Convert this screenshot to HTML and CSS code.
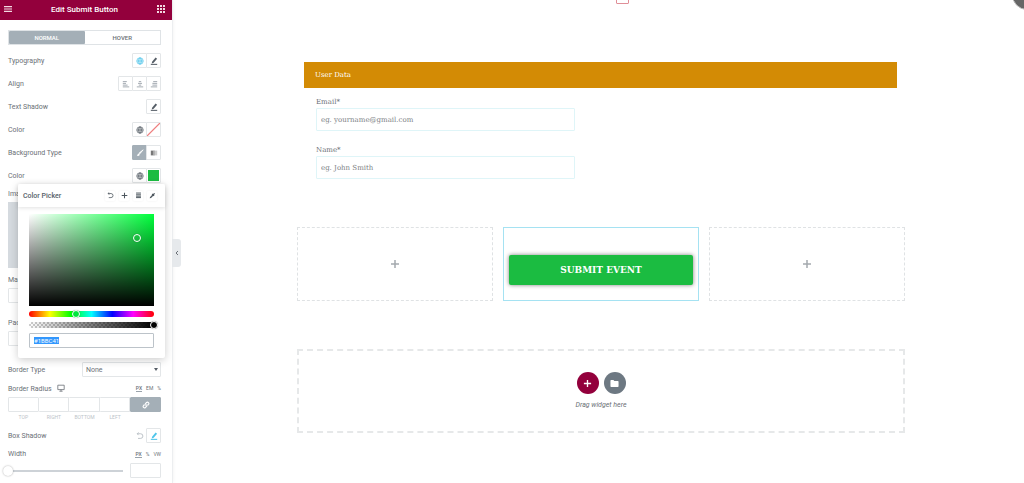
FILE: index.html
```html
<!DOCTYPE html>
<html lang="en">
<head>
  <meta charset="UTF-8">
  <meta name="viewport" content="width=device-width, initial-scale=1.0">
  <title>Edit Submit Button</title>
  <link rel="stylesheet" href="styles.css">
</head>
<body>
  <svg class="sprite" aria-hidden="true">
    <symbol id="plus" viewBox="0 0 10 10"><path d="M5 1v8M1 5h8" fill="none" stroke="currentColor" stroke-width="1.5"/></symbol>
    <symbol id="pen" viewBox="0 0 10 10"><path d="M2.600 5.800 7 .6l1.900 1.500-4.300 5.100-2.400.8z" fill="currentColor"/><path d="M1 9.200h8" stroke="currentColor" stroke-width="1.300"/></symbol>
    <symbol id="globe" viewBox="0 0 10 10"><g fill="none" stroke="currentColor" stroke-width=".9"><circle cx="5" cy="5" r="4"/><ellipse cx="5" cy="5" rx="1.9" ry="4"/><path d="M1 5h8M5 1v8"/></g></symbol>
    <symbol id="undo" viewBox="0 0 10 10"><path d="M1.5 2.2h4.2a2.8 2.8 0 0 1 0 5.8H2.5M3.2.6 1.5 2.2l1.7 1.7" fill="none" stroke="currentColor" stroke-width="1.1"/></symbol>
  </svg>

  <div class="editor">
    <aside class="sidebar">
      <header class="top-bar">
        <button class="bar-btn" aria-label="Menu"><svg viewBox="0 0 10 8"><path d="M0 1h10M0 4h10M0 7h10" stroke="currentColor" stroke-width="1.5"/></svg></button>
        <h1>Edit Submit Button</h1>
        <button class="bar-btn" aria-label="Widgets"><svg viewBox="0 0 8 8"><path d="M0 1h8M0 4h8M0 7h8" stroke="currentColor" stroke-width="2" stroke-dasharray="2 1"/></svg></button>
      </header>

      <div class="controls">
        <div class="tabs">
          <button class="active">NORMAL</button>
          <button>HOVER</button>
        </div>

        <div class="row">
          <span>Typography</span>
          <div class="btns">
            <button class="blue" aria-label="Global font"><svg><use href="#globe"/></svg></button>
            <button aria-label="Edit typography"><svg><use href="#pen"/></svg></button>
          </div>
        </div>
        <div class="row">
          <span>Align</span>
          <div class="btns light">
            <button aria-label="Left"><svg viewBox="0 0 10 10"><path d="M1 2h5M1 4.2h4M1 6.4h6M1 8.6h8" stroke="currentColor"/></svg></button>
            <button aria-label="Center"><svg viewBox="0 0 10 10"><path d="M3.5 2h3M2.5 4.2h5M3.5 6.4h3M1 8.6h8" stroke="currentColor"/></svg></button>
            <button aria-label="Right"><svg viewBox="0 0 10 10"><path d="M4 2h5M3 4.2h6M3 6.4h6M1 8.6h8" stroke="currentColor"/></svg></button>
          </div>
        </div>
        <div class="row">
          <span>Text Shadow</span>
          <div class="btns"><button aria-label="Edit text shadow"><svg><use href="#pen"/></svg></button></div>
        </div>
        <div class="row">
          <span>Color</span>
          <div class="btns">
            <button aria-label="Global color"><svg><use href="#globe"/></svg></button>
            <button class="swatch none" aria-label="Text color"></button>
          </div>
        </div>
        <div class="row">
          <span>Background Type</span>
          <div class="btns">
            <button class="active" aria-label="Classic"><svg viewBox="0 0 10 10"><path d="M9 1 4.8 6 3.9 5.1z" stroke="currentColor" fill="currentColor"/><path d="M3.3 5.5c-1.5.1-1 2-2.3 2.7 1.7.9 3.8.2 3.7-1.3z" fill="currentColor"/></svg></button>
            <button aria-label="Gradient"><svg viewBox="0 0 10 10"><path d="M1 2h3v6H1z" fill="#777"/><path d="M4 2h2v6H4z" fill="#999"/><path d="M6 2h3v6H6z" fill="#ccc"/></svg></button>
          </div>
        </div>
        <div class="row color-row">
          <span>Color</span>
          <div class="btns">
            <button aria-label="Global color"><svg><use href="#globe"/></svg></button>
            <button class="swatch" aria-label="Background color"><i></i></button>
          </div>

          <div class="picker">
            <div class="picker-head">
              <h2>Color Picker</h2>
              <button aria-label="Clear"><svg><use href="#undo"/></svg></button>
              <button aria-label="Add"><svg><use href="#plus"/></svg></button>
              <button aria-label="Global colors"><svg viewBox="0 0 10 10"><path d="M1.5 1.5h7M1.5 4h7M1.5 6h7M1.5 8h7" stroke="currentColor" stroke-width="1.4"/></svg></button>
              <button aria-label="Eyedropper"><svg viewBox="0 0 10 10"><path d="M1 9l.6-2L5 3.6 6.400 5 3 8.400z" fill="currentColor"/><path d="M4.500 2.800 7.200 5.500M6 4 8 2" stroke="currentColor" stroke-width="1.8"/></svg></button>
            </div>
            <div class="picker-body">
              <div class="palette"><i class="dot"></i></div>
              <div class="strip hue"><i class="dot"></i></div>
              <div class="strip alpha"><i class="dot"></i></div>
              <input type="text" class="hex" id="hex" value="#1BBC41" aria-label="Hex color">
            </div>
          </div>
        </div>

        <div class="group">
          <span class="label">Image</span>
          <div class="image-box"></div>
        </div>
        <div class="group spaced">
          <label class="label" for="margin">Margin</label>
          <input type="text" class="field" id="margin">
        </div>
        <div class="group">
          <label class="label" for="padding">Padding</label>
          <input type="text" class="field" id="padding">
        </div>

        <div class="row border-row">
          <label for="border">Border Type</label>
          <div class="select">
            <select id="border"><option>None</option><option>Solid</option></select>
          </div>
        </div>

        <div class="row title-row">
          <span>Border Radius <svg class="desktop" viewBox="0 0 10 10"><path d="M1 1.5h8V7H1zM3 9h4M5 7v2" fill="none" stroke="currentColor"/></svg></span>
          <span class="units"><b>PX</b> <em>EM</em> <em>%</em></span>
        </div>
        <div class="sides">
          <input type="text" id="top"><input type="text" id="right"><input type="text" id="bottom"><input type="text" id="left">
          <button aria-label="Link values"><svg viewBox="0 0 10 10"><g fill="none" stroke="currentColor" stroke-width="1.4"><path d="M4.4 5.6a1.7 1.7 0 0 1 0-2.4l1.3-1.3a1.7 1.7 0 0 1 2.400 2.400l-1 1"/><path d="M5.600 4.400a1.700 1.700 0 0 1 0 2.400L4.300 8.100a1.700 1.700 0 0 1-2.400-2.400l1-1"/></g></svg></button>
          <label for="top">TOP</label><label for="right">RIGHT</label><label for="bottom">BOTTOM</label><label for="left">LEFT</label>
        </div>

        <div class="row shadow-row">
          <span>Box Shadow</span>
          <div class="btns">
            <button class="reset" aria-label="Reset"><svg><use href="#undo"/></svg></button>
            <button class="blue" aria-label="Edit box shadow"><svg><use href="#pen"/></svg></button>
          </div>
        </div>
        <div class="row title-row">
          <label for="width">Width</label>
          <span class="units"><b>PX</b> <em>%</em> <em>VW</em></span>
        </div>
        <div class="slider-row">
          <input type="range" id="width" value="0">
          <input type="text" class="field" aria-label="Width value">
        </div>
      </div>
      <button class="collapse" aria-label="Hide panel"><svg viewBox="0 0 6 6"><path d="M4 1 2 3l2 2" fill="none" stroke="currentColor"/></svg></button>
    </aside>

    <main class="preview">
      <i class="red-box"></i>
      <button class="close" aria-label="Close"></button>
      <form class="page">
        <section class="user-data">
          <h2>User Data</h2>
          <div class="form-group">
            <label for="email">Email*</label>
            <input type="email" id="email" placeholder="eg. yourname@gmail.com">
          </div>
          <div class="form-group">
            <label for="name">Name*</label>
            <input type="text" id="name" placeholder="eg. John Smith">
          </div>
        </section>

        <section class="columns">
          <div class="column empty"><svg><use href="#plus"/></svg></div>
          <div class="column selected"><button type="button" class="submit">SUBMIT EVENT</button></div>
          <div class="column empty"><svg><use href="#plus"/></svg></div>
        </section>

        <section class="drop-area">
          <div class="drop-btns">
            <button type="button" class="add" aria-label="Add section"><svg><use href="#plus"/></svg></button>
            <button type="button" class="folder" aria-label="Add template"><svg viewBox="0 0 10 10"><path d="M.5 2q0-.8.8-.8h2.500l1 1.100h3.900q.8 0 .8.8v4.900q0 .8-.8.8H1.300q-.8 0-.8-.8z" fill="currentColor"/></svg></button>
          </div>
          <p>Drag widget here</p>
        </section>
      </form>
    </main>
  </div>

  <script>
    const hex = document.getElementById('hex');
    hex.focus();
    hex.select();
  </script>
</body>
</html>
```

FILE: styles.css
```css
* {
  box-sizing: border-box;
}
body {
  margin: 0;
  font-family: Roboto, sans-serif;
  font-size: 7px;
  color: #6b7076;
  background: #fff;
}
button, input, select {
  font: inherit;
  color: inherit;
  margin: 0;
  padding: 0;
  background: #fff;
  border: 1px solid #e3e6e8;
  border-radius: 1px;
  min-width: 0;
}
button {
  display: flex;
  align-items: center;
  justify-content: center;
}
input:focus {
  outline: none;
}
svg {
  display: block;
  width: 8px;
  height: 8px;
}
.sprite {
  position: absolute;
  width: 0;
  height: 0;
}
.editor {
  display: flex;
  min-height: 100vh;
}

/* Sidebar */
.sidebar {
  position: relative;
  flex: 0 0 173px;
  min-width: 0;
  border-right: 1px solid #eceef0;
  box-shadow: 0 0 4px rgba(0, 0, 0, 0.06);
}
.top-bar {
  display: flex;
  align-items: center;
  justify-content: space-between;
  height: 20px;
  padding: 0 7px 2px 4px;
  background: #93003c;
  color: #fff;
}
.top-bar h1 {
  margin: 0;
  font-size: 8px;
  font-weight: 500;
}
.bar-btn {
  border: 0;
  background: none;
  color: #f3d9e2;
}
.controls {
  padding: 10px 11px 0 8px;
}
.tabs {
  display: grid;
  grid-template-columns: 1fr 1fr;
  height: 15px;
  margin-bottom: 8px;
  border: 1px solid #dfe3e6;
}
.tabs button {
  border: 0;
  font-size: 6px;
  font-weight: 500;
}
.tabs .active, .btns .active {
  background: #a4afb7;
  border-color: #a4afb7;
  color: #fff;
}
.row {
  display: flex;
  align-items: center;
  justify-content: space-between;
  height: 15px;
  margin-bottom: 8px;
}
.btns {
  display: flex;
  color: #555d66;
}
.btns button {
  width: 15px;
  height: 15px;
}
.btns button + button {
  margin-left: -1px;
}
.light {
  color: #8d969e;
}
.btns .blue {
  color: #4ec5ea;
}
.btns .reset {
  border-color: transparent;
  color: #b5bcc2;
}
.btns .none {
  background: linear-gradient(to bottom right, #fff 45%, #ee8080 48%, #ee8080 52%, #fff 55%);
}
.swatch i {
  width: 11px;
  height: 11px;
  background: #1bbc41;
}
.color-row {
  position: relative;
  margin-bottom: 5px;
}
.label {
  display: block;
  width: 12px;
  height: 14px;
  line-height: 12px;
  overflow: hidden;
}
.group {
  margin-bottom: 6px;
}
.spaced {
  margin-bottom: 14px;
}
.image-box {
  height: 66px;
  background: #d5dadf;
}
.field {
  display: block;
  width: 31px;
  height: 15px;
}
.border-row {
  margin: 16px 0 5px;
}
.select {
  position: relative;
  width: 79px;
}
.select select {
  display: block;
  width: 100%;
  height: 15px;
  padding-left: 3px;
  appearance: none;
}
.select::after {
  content: "";
  position: absolute;
  right: 3px;
  top: 6px;
  border: 2px solid transparent;
  border-top: 3px solid #555d66;
}
.title-row {
  height: 12px;
  margin-bottom: 3px;
}
.desktop {
  display: inline-block;
  margin-left: 4px;
  vertical-align: -1px;
}
.units {
  display: flex;
  gap: 4px;
  font-size: 5px;
}
.units b {
  font-weight: 500;
  border-bottom: 1px solid #9aa3ab;
}
.units em {
  font-style: normal;
}
.sides {
  display: grid;
  grid-template-columns: repeat(5, 1fr);
  grid-template-rows: 15px 10px;
  margin-bottom: 6px;
}
.sides input + input {
  border-left: 0;
}
.sides button {
  background: #a4afb7;
  border-color: #a4afb7;
  color: #fff;
}
.sides label {
  font-size: 5px;
  line-height: 10px;
  text-align: center;
  color: #bcc3c9;
}
.shadow-row {
  margin-bottom: 5px;
}
.slider-row {
  display: flex;
  align-items: center;
  gap: 7px;
}
.slider-row input[type=range] {
  flex: 1;
  width: 0;
  height: 10px;
  margin-left: -5px;
  border: 0;
  appearance: none;
  background: linear-gradient(#cdd2d7, #cdd2d7) center / 100% 2px no-repeat;
}
.slider-row input::-webkit-slider-thumb {
  appearance: none;
  width: 10px;
  height: 10px;
  border-radius: 50%;
  background: #fff;
  box-shadow: 0 0 2px rgba(0, 0, 0, 0.35);
}
.collapse {
  position: absolute;
  top: 239px;
  left: 100%;
  z-index: 1;
  width: 9px;
  height: 28px;
  border: 0;
  border-radius: 0 3px 3px 0;
  background: #e6e9ec;
}
.collapse svg {
  width: 6px;
  height: 6px;
}

/* Color picker */
.picker {
  position: absolute;
  z-index: 2;
  top: 16px;
  left: 10px;
  width: 147px;
  background: #fff;
  border-radius: 2px;
  box-shadow: 0 2px 8px rgba(0, 0, 0, 0.2);
}
.picker-head {
  display: flex;
  align-items: center;
  gap: 4px;
  height: 23px;
  padding: 0 8px 0 5px;
  box-shadow: 0 1px 4px rgba(0, 0, 0, 0.12);
}
.picker-head h2 {
  flex: 1;
  margin: 0;
  font-size: 7px;
  font-weight: 500;
  color: #556068;
}
.picker-head button {
  width: 10px;
  height: 10px;
  border: 0;
  color: #4d565e;
  box-shadow: 0 0 2px rgba(0, 0, 0, 0.08);
}
.picker-head svg {
  width: 7px;
  height: 7px;
}
.picker-body {
  padding: 7px 11px 10px;
}
.palette, .strip {
  position: relative;
}
.palette {
  height: 92px;
  background: linear-gradient(to top, #000, transparent), linear-gradient(to right, #fff, #00ff3c);
}
.strip {
  height: 6px;
  margin-top: 5px;
  border-radius: 3px;
}
.hue {
  background: linear-gradient(to right, #f00, #ff0, #0f0, #0ff, #00f, #f0f, #f00);
}
.alpha {
  background: linear-gradient(to right, transparent, #000), repeating-conic-gradient(#ccc 0 25%, #fff 0 50%) 0 0 / 4px 4px;
}
.dot {
  position: absolute;
  width: 8px;
  height: 8px;
  border: 1px solid #fff;
  border-radius: 50%;
  box-shadow: 0 0 1px rgba(0, 0, 0, 0.4);
}
.palette .dot {
  top: 20px;
  left: 104px;
}
.hue .dot {
  top: -1px;
  left: 43px;
  background: #00e63c;
}
.alpha .dot {
  top: -1px;
  right: -4px;
  background: #000;
}
.hex {
  display: block;
  width: 100%;
  height: 15px;
  margin-top: 5px;
  padding-left: 4px;
  font-size: 6px;
  border-color: #bcc3c9;
}
.hex::selection {
  background: #3297fd;
  color: #fff;
}

/* Preview */
.preview {
  position: relative;
  flex: 1;
  min-width: 0;
  overflow: hidden;
  font-family: "Roboto Slab", "DejaVu Serif", serif;
}
.red-box {
  position: absolute;
  top: -6px;
  left: 52%;
  width: 13px;
  height: 10px;
  border: 1px solid #e08f98;
  border-radius: 1px;
}
.close {
  position: absolute;
  top: -20px;
  right: -18px;
  width: 30px;
  height: 30px;
  border: 1px solid #bbb;
  border-radius: 50%;
  background: #666;
}
.page {
  padding: 62px 119px 50px 124px;
}
.user-data {
  padding: 0 8px 0 7px;
}
.user-data h2 {
  margin: 0 0 9px;
  padding-left: 11px;
  font-size: 7px;
  font-weight: normal;
  line-height: 26px;
  color: #fff;
  background: #d38b05;
}
.form-group {
  width: 259px;
  margin: 0 0 14px 12px;
}
.form-group label {
  display: block;
  line-height: 11px;
}
.form-group input {
  display: block;
  width: 100%;
  height: 23px;
  padding: 0 4px;
  border-color: #dff5f8;
}
.form-group input::placeholder {
  color: #7d8185;
}
.columns {
  display: grid;
  grid-template-columns: repeat(3, 1fr);
  gap: 10px;
  margin-top: 48px;
}
.column {
  display: flex;
  align-items: center;
  justify-content: center;
  height: 74px;
}
.empty {
  border: 1px dashed #dfe2e4;
  color: #a4a9ae;
}
.empty svg {
  width: 10px;
  height: 10px;
}
.selected {
  padding: 11px 5px 0;
  border: 1px solid #a5e2f2;
}
.submit {
  flex: 1;
  height: 30px;
  border: 0;
  border-radius: 2px;
  background: #1bbc41;
  box-shadow: 0 0 4px rgba(0, 0, 0, 0.5);
  color: #fff;
  font-size: 9px;
  font-weight: bold;
}
.drop-area {
  display: flex;
  flex-direction: column;
  align-items: center;
  margin-top: 48px;
  padding: 21px 0 20px;
  border: 2px dashed #e6e8e9;
  font-family: Roboto, sans-serif;
}
.drop-btns {
  display: flex;
  gap: 5px;
}
.drop-btns button {
  width: 22px;
  height: 22px;
  border: 0;
  border-radius: 50%;
  color: #fff;
}
.drop-btns svg {
  width: 9px;
  height: 9px;
}
.drop-btns .add {
  background: #93003c;
}
.drop-btns .folder {
  background: #6d7882;
}
.drop-area p {
  margin: 6px 0 0;
  font-style: italic;
  line-height: 11px;
}
```
